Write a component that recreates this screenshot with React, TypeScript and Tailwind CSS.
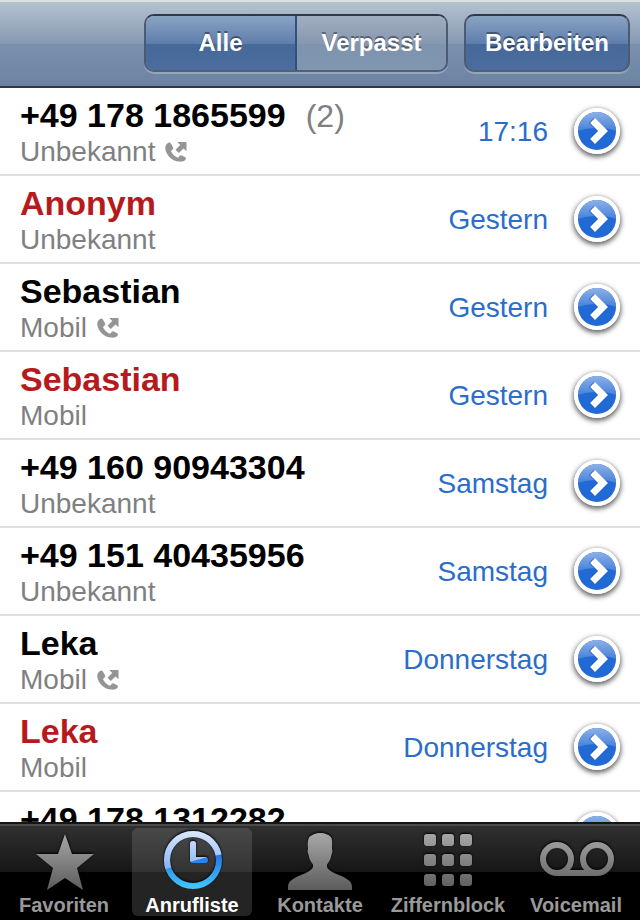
import { useState } from 'react';
import type { ReactNode } from 'react';
import clsx from 'clsx';

interface Call {
  id: number;
  name: string;
  count?: number;
  label: string;
  outgoing?: boolean;
  missed?: boolean;
  date: string;
}

const calls: Call[] = [
  { id: 1, name: '+49 178 1865599', count: 2, label: 'Unbekannt', outgoing: true, date: '17:16' },
  { id: 2, name: 'Anonym', label: 'Unbekannt', missed: true, date: 'Gestern' },
  { id: 3, name: 'Sebastian', label: 'Mobil', outgoing: true, date: 'Gestern' },
  { id: 4, name: 'Sebastian', label: 'Mobil', missed: true, date: 'Gestern' },
  { id: 5, name: '+49 160 90943304', label: 'Unbekannt', date: 'Samstag' },
  { id: 6, name: '+49 151 40435956', label: 'Unbekannt', date: 'Samstag' },
  { id: 7, name: 'Leka', label: 'Mobil', outgoing: true, date: 'Donnerstag' },
  { id: 8, name: 'Leka', label: 'Mobil', missed: true, date: 'Donnerstag' },
  { id: 9, name: '+49 178 1312282', label: '', date: '' },
];

function OutgoingIcon() {
  return (
    <svg viewBox="0 0 22 20" className="h-5 w-[22px] shrink-0" fill="#959595" role="img" aria-label="Ausgehend">
      <path d="M2.6 1.2C.8 2.6-.1 4.8.4 7.4 1.7 13.6 7.4 19 14.2 19.6c2.8.2 5.2-.6 6.4-2.2.6-.9.4-1.6-.4-2.2l-3.4-1.7c-.9-.4-1.6-.2-2.2.5l-1 1.2c-.4.4-.9.5-1.5.2-2.6-1.2-4.7-3.2-5.9-5.8-.2-.5-.1-.9.3-1.2l1.1-1c.6-.6.8-1.200.5-1.900L6 1.800C5.400.5 4.100.1 2.600 1.200Z" />
      <path d="M12.200 0H21.500V9.300L18.500 6.400 13.800 11.100 10.500 7.800 15.200 3.100Z" />
    </svg>
  );
}

function DetailIcon() {
  return (
    <svg viewBox="0 0 46 46" className="block size-full" aria-hidden="true">
      <circle cx="23" cy="23" r="23" fill="#fff" />
      <circle cx="23" cy="23" r="19" fill="#216ad6" />
      <path d="M4 23a19 19 0 0 1 38 0c-8-4-28-4-38 0Z" fill="url(#gloss)" />
      <path d="M17.500 12.500 28 23 17.500 33.500" fill="none" stroke="#1a58b8" strokeWidth="7" />
      <path d="M18.500 12.500 29 23 18.500 33.500" fill="none" stroke="#fff" strokeWidth="7" />
    </svg>
  );
}

function CallRow({ call }: { call: Call }) {
  return (
    <li className="flex shrink-0 items-center border-b-2 border-[#e0e0e0] bg-white pr-5 pl-5">
      <div className="min-w-0 flex-1 pt-2 pb-[6px]">
        <div className="flex items-baseline gap-5 text-[34px] leading-[38px] whitespace-nowrap">
          <span className={clsx('font-bold', call.missed ? 'text-[#b71a1c]' : 'text-black')}>{call.name}</span>
          {call.count && <span className="text-[32px] leading-8 text-[#808080]">({call.count})</span>}
        </div>
        <div className="mt-[2px] flex h-8 items-center gap-[10px] text-[28px] leading-8 text-[#808080]">
          <span>{call.label}</span>
          {call.outgoing && <OutgoingIcon />}
        </div>
      </div>
      <span className="pt-[2px] text-[28px] leading-8 text-[#2b6dcb]">{call.date}</span>
      <button
        type="button"
        aria-label={`Details zu ${call.name}`}
        className="ml-[26px] size-[46px] shrink-0 rounded-full shadow-[0_2px_5px_1px_rgba(0,0,0,0.6)]"
      >
        <DetailIcon />
      </button>
    </li>
  );
}

const tabs: { name: string; icon: ReactNode }[] = [
  {
    name: 'Favoriten',
    icon: <path d="M41 4 48 24H70L53 38 59 60 41 48 23 60 29 38 12 24H34Z" fill="url(#grey)" />,
  },
  {
    name: 'Anrufliste',
    icon: (
      <>
        <g fill="none" stroke="url(#blueLow)">
          <circle cx="41" cy="30" r="26" strokeWidth="6" />
          <path d="M41 14V30H53" strokeWidth="6" strokeLinecap="round" strokeLinejoin="round" />
        </g>
        <g fill="none" stroke="url(#blueHigh)" clipPath="url(#clockGloss)">
          <circle cx="41" cy="30" r="26" strokeWidth="6" />
          <path d="M41 14V30H53" strokeWidth="6" strokeLinecap="round" strokeLinejoin="round" />
        </g>
      </>
    ),
  },
  {
    name: 'Kontakte',
    icon: (
      <path
        d="M40 3C45 3 50 5 51.500 8 52.500 11 52 16 52 19 52.800 20 52.400 23 51.400 25 51 29 49 32 47 34.500V37C49 41 54 43 60 45.500 67 48.500 72 51 72 57V60H8V57C8 51 13 48.500 20 45.500 26 43 31 41 33 37V34.500C31 32 29 29 28.600 25 27.600 23 27.200 20 28 19 27.500 15 27.500 10 29 7.500 31 5 36 3 40 3Z"
        fill="url(#grey)"
      />
    ),
  },
  {
    name: 'Ziffernblock',
    icon: (
      <g fill="url(#grey)">
        {[4, 24, 44].map((y) =>
          [16, 34, 52].map((x) => <rect key={`${x}-${y}`} x={x} y={y} width="12" height="12" rx="3" />),
        )}
      </g>
    ),
  },
  {
    name: 'Voicemail',
    icon: (
      <g fill="none" stroke="url(#grey)" strokeWidth="6">
        <circle cx="21" cy="29" r="14" />
        <circle cx="61" cy="29" r="14" />
        <path d="M21 43H61" />
      </g>
    ),
  },
];

// Gradients shared by the row and tab icons
function Gradients() {
  return (
    <svg className="absolute size-0" aria-hidden="true">
      <defs>
        <linearGradient id="gloss" x1="0" y1="0" x2="0" y2="1">
          <stop offset="0" stopColor="#8db1e8" />
          <stop offset="1" stopColor="#4681da" />
        </linearGradient>
        <linearGradient id="grey" gradientUnits="userSpaceOnUse" x1="0" y1="2" x2="0" y2="60">
          <stop offset="0" stopColor="#a9a9a9" />
          <stop offset="1" stopColor="#5c5c5c" />
        </linearGradient>
        <linearGradient id="blueHigh" gradientUnits="userSpaceOnUse" x1="0" y1="2" x2="0" y2="42">
          <stop offset="0" stopColor="#dce6f8" />
          <stop offset="1" stopColor="#7fb0f2" />
        </linearGradient>
        <linearGradient id="blueLow" gradientUnits="userSpaceOnUse" x1="0" y1="26" x2="0" y2="59">
          <stop offset="0" stopColor="#2378e6" />
          <stop offset="1" stopColor="#44c8fb" />
        </linearGradient>
        <clipPath id="clockGloss">
          <path d="M0 0H82V22Q54 27 41 31T0 43Z" />
        </clipPath>
      </defs>
    </svg>
  );
}

const navButton =
  'text-2xl font-bold text-white [text-shadow:0_-2px_0_rgba(0,0,0,0.4)] cursor-pointer leading-7';
const blueFill = 'bg-[linear-gradient(#8ba3c3_0%,#5d7dab_52%,#46699a_52%,#4a6d9d_100%)]';
const frame =
  'rounded-[10px] border-2 border-t-[#2f3a49] border-x-[#4a5b73] border-b-[#50617a] shadow-[0_2px_0_rgba(255,255,255,0.25)]';

export default function App() {
  const [filter, setFilter] = useState('Alle');
  const [tab, setTab] = useState('Anrufliste');
  const visible = filter === 'Alle' ? calls : calls.filter((c) => c.missed);

  return (
    <div className="flex h-screen flex-col overflow-hidden bg-white font-['Liberation_Sans',Arial,sans-serif]">
      <Gradients />

      {/* Navigation bar */}
      <header className="flex shrink-0 justify-end gap-4 border-t-2 border-b-2 border-t-[#dbe0e1] border-b-[#2d3642] bg-[linear-gradient(#b5c2cf_0%,#8699b3_50%,#7b90af_50%,#6c83a2_100%)] pt-3 pr-[10px] pb-[14px]">
        <div className={clsx('flex h-[58px] w-[304px] overflow-hidden', frame)}>
          {['Alle', 'Verpasst'].map((name) => (
            <button
              key={name}
              type="button"
              aria-pressed={filter === name}
              onClick={() => setFilter(name)}
              className={clsx(
                navButton,
                'flex-1 first:border-r-2 first:border-[#30507f]',
                filter === name ? blueFill : 'bg-[linear-gradient(#a0aec1_0%,#8797ae_52%,#7e94ae_52%,#8096b0_100%)]',
              )}
            >
              {name}
            </button>
          ))}
        </div>
        <button type="button" className={clsx(navButton, frame, blueFill, 'h-[58px] w-[166px]')}>
          Bearbeiten
        </button>
      </header>

      {/* Call list */}
      <main className="min-h-0 flex-1 overflow-hidden">
        <ul className="flex flex-col">
          {visible.map((call) => (
            <CallRow key={call.id} call={call} />
          ))}
        </ul>
      </main>

      {/* Tab bar */}
      <nav className="relative flex shrink-0 border-t-2 border-[#151515] bg-[linear-gradient(#4a4a4a_0,#4a4a4a_2px,#303030_2px,#161616_48px,#000_48px)] pt-1 pb-1">
        {tabs.map(({ name, icon }) => (
          <button
            key={name}
            type="button"
            aria-current={tab === name ? 'page' : undefined}
            onClick={() => setTab(name)}
            className={clsx(
              'mx-1 flex min-w-0 flex-1 cursor-pointer flex-col items-center rounded-md pt-[2px]',
              tab === name
                ? 'bg-[linear-gradient(#484848_0,#333_44px,#242424_44px)] text-white'
                : 'text-[#999]',
            )}
          >
            <svg viewBox="0 0 80 60" className="h-[60px] w-20 drop-shadow-[0_-1px_1px_#000]" aria-hidden="true">
              {icon}
            </svg>
            <span className="mt-1 text-xl leading-[22px] font-bold whitespace-nowrap">{name}</span>
          </button>
        ))}
      </nav>
    </div>
  );
}
